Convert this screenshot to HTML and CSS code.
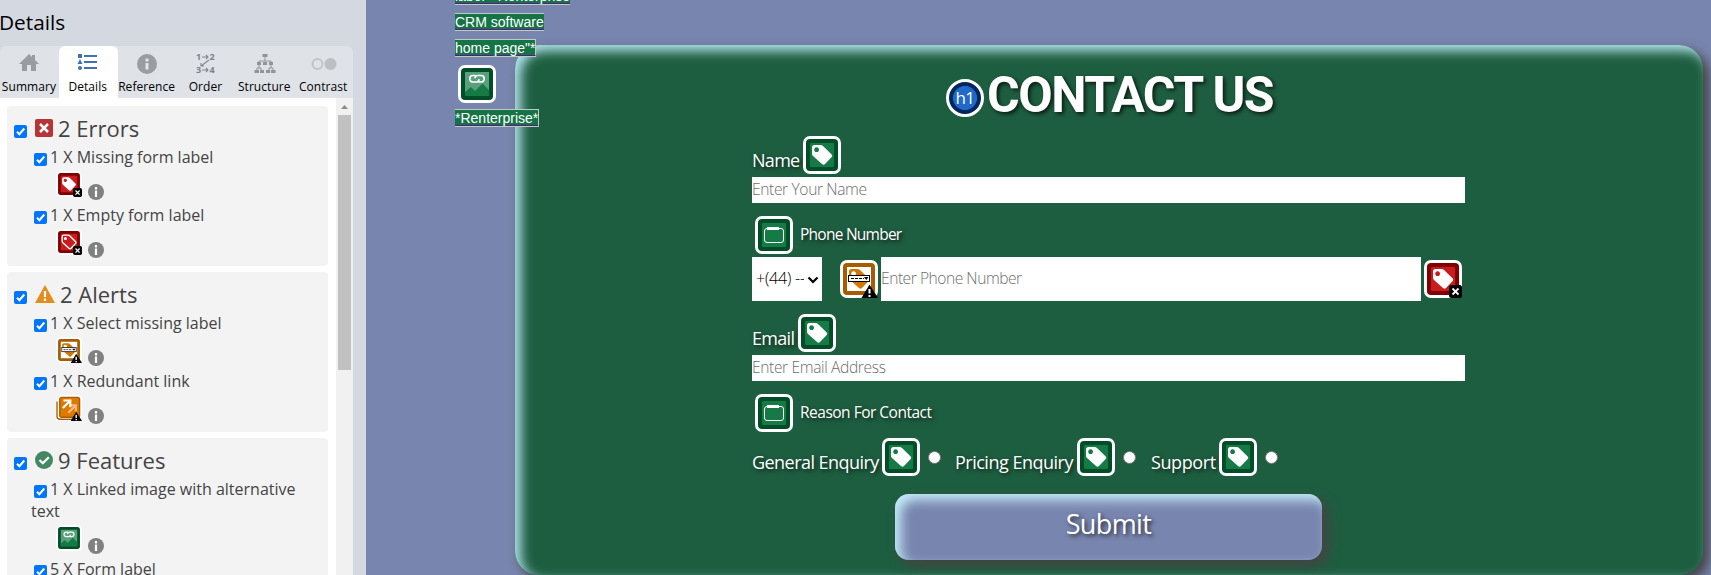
FILE: index.html
```
<!DOCTYPE html>
<html lang="en">
<head>
<meta charset="utf-8">
<title>Contact us</title>
<link rel="stylesheet" href="styles.css">
</head>
<body>
<svg class="defs" aria-hidden="true">
  <symbol id="tagshape" viewBox="0 0 38 38"><path fill-rule="evenodd" d="M9 11.5Q9 9 11.5 9H17.5Q19 9 20 10L28.7 18.6Q29.8 19.8 28.7 21L22 28Q20.5 29.5 19 28L10 20Q9 19 9 17.5ZM13.6 11.3a2.4 2.4 0 1 0 .01 0Z"/></symbol>
  <symbol id="warnbadge" viewBox="0 0 38 38"><path d="M29.500 24.500L38 38H21.500Z"/><path d="M29.500 29v4.500M29.500 35v2" stroke="#fff" stroke-width="2"/></symbol>
  <symbol id="xbadge" viewBox="0 0 38 38"><rect x="25" y="25" width="13" height="13" rx="2.500"/><path d="M28.500 28.500l6 6m0-6l-6 6" stroke="#fff" stroke-width="1.800"/></symbol>
  <symbol id="tag" viewBox="0 0 38 38"><rect width="38" height="38" rx="7" fill="#fff"/><rect x="3" y="3" width="32" height="32" rx="4" fill="#014d27"/><rect x="7" y="7" width="24" height="24" rx="1" fill="#167a47"/><use href="#tagshape" fill="#fff"/></symbol>
  <symbol id="missing" viewBox="0 0 38 38"><rect width="38" height="38" rx="7" fill="#fff"/><rect x="3" y="3" width="32" height="32" rx="4" fill="#800000"/><rect x="7" y="7" width="24" height="24" rx="1" fill="#c91c1e"/><use href="#tagshape" fill="#fff"/><use href="#xbadge"/></symbol>
  <symbol id="empty" viewBox="0 0 38 38"><rect width="38" height="38" rx="7" fill="#fff"/><rect x="3" y="3" width="32" height="32" rx="4" fill="#800000"/><rect x="7" y="7" width="24" height="24" rx="1" fill="#c91c1e"/><path d="M9 11.500Q9 9 11.500 9H17.500Q19 9 20 10L28.700 18.600Q29.800 19.800 28.700 21L22 28Q20.500 29.500 19 28L10 20Q9 19 9 17.500Z" fill="none" stroke="#fff" stroke-width="2"/><circle cx="13.800" cy="13.800" r="2.200" fill="#fff"/><use href="#xbadge"/></symbol>
  <symbol id="select" viewBox="0 0 38 38"><rect width="38" height="38" rx="7" fill="#fff"/><rect x="5" y="5" width="28" height="28" rx="2" fill="none" stroke="#a85c00" stroke-width="4"/><use href="#tagshape" fill="#d07800"/><rect x="8.500" y="15.500" width="21" height="6" fill="#fff" stroke="#000"/><path d="M11 18.500h13" stroke="#000" stroke-dasharray="3 1"/><path d="M24 17h4.500l-2.200 3z"/><use href="#warnbadge"/></symbol>
  <symbol id="redundant" viewBox="0 0 38 38"><rect x="-3" y="7" width="34" height="32" rx="6" fill="#fff"/><path d="M1.500 9.500v22q0 4 4 4h20" fill="none" stroke="#a85c00" stroke-width="2"/><rect x="3" width="35" height="34" rx="6" fill="#fff"/><rect x="5.500" y="3.500" width="29" height="29" rx="3" fill="#de7a00" stroke="#a85c00" stroke-width="2"/><path d="M18 26l11-11M20 15h9v9" fill="none" stroke="#f3bd83" stroke-width="3"/><path d="M10 19l11-11M11 8h10v10" fill="none" stroke="#fff" stroke-width="3"/><use href="#warnbadge"/></symbol>
  <symbol id="image" viewBox="0 0 38 38"><rect width="38" height="38" rx="7" fill="#fff"/><rect x="3" y="3" width="32" height="32" rx="4" fill="#014d27"/><rect x="7" y="7" width="24" height="24" fill="#59a17c"/><path d="M7 27l6-5 4 4 7.500-7.500L31 25v6H7z" fill="#167a47"/><path d="M17.500 10.500H15a3.250 3.250 0 0 0 0 6.500h3.500q1.800 0 2.700-2.800M20.500 17H23a3.250 3.250 0 0 0 0-6.500h-3.500q-1.800 0-2.700 2.800" fill="none" stroke="#fff" stroke-width="1.700"/></symbol>
  <symbol id="fieldset" viewBox="0 0 38 38"><rect width="38" height="38" rx="7" fill="#fff"/><rect x="3" y="3" width="32" height="32" rx="4" fill="#014d27"/><rect x="7" y="7" width="24" height="24" rx="1" fill="#167a47"/><rect x="9.500" y="12.500" width="19" height="14" rx="2.500" fill="none" stroke="#fff"/><path d="M12 12.500h12" stroke="#fff" stroke-width="3"/></symbol>
  <symbol id="info" viewBox="0 0 16 16"><circle cx="8" cy="8" r="8" fill="#808080"/><path d="M8 3v2.400M8 6.500V13" stroke="#fff" stroke-width="2.200"/></symbol>
  <symbol id="check" viewBox="0 0 13 13"><rect width="13" height="13" rx="2" fill="#0075ff"/><path d="M3 6.800L5.400 9.200 10.300 3.500" fill="none" stroke="#fff" stroke-width="2"/></symbol>
</svg>
<div class="app">
  <aside class="panel">
    <h2 class="panel-title">Details</h2>
    <nav class="tabs">
      <div class="tab"><svg width="24" height="24"><path d="M12 4L2 14h3v7h5v-6h4v6h5v-7h3l-4-4V5h-3v2z" fill="#9a9c9f"/></svg><span>Summary</span></div>
      <div class="tab active"><svg width="24" height="24"><g fill="#3d72b8"><rect x="2" y="4" width="4" height="4"/><path d="M4 9l2.500 5h-5z"/><circle cx="4" cy="18" r="2"/></g><path d="M8 6h13M8 12h13M8 18h13" stroke="#3d72b8" stroke-width="2"/></svg><span>Details</span></div>
      <div class="tab"><svg width="24" height="24"><circle cx="12" cy="14" r="10" fill="#9a9c9f"/><path d="M12 8.500v3M12 13v6.500" stroke="#e2e5e9" stroke-width="3"/></svg><span>Reference</span></div>
      <div class="tab"><svg class="order" width="24" height="24"><g fill="#808285"><text x="2" y="10">1</text><text x="15.500" y="10">2</text><text x="2" y="23">3</text><text x="15.500" y="23">4</text></g><path d="M8 7h6m-2-2l2 2-2 2M8 20h6m-2-2l2 2-2 2M15 10l-8 6m0-3v3h3" fill="none" stroke="#85878a" stroke-width="1.100"/></svg><span>Order</span></div>
      <div class="tab"><svg width="24" height="24"><path d="M12 7v4M6 13v-2h12v2M4 20v-2h4v2M16 20v-2h4v2M6 15v3M18 15v3" fill="none" stroke="#929497"/><g fill="#929497"><rect x="9.500" y="4" width="5" height="3"/><rect x="4" y="12" width="4" height="3"/><rect x="10" y="12" width="4" height="3"/><rect x="16" y="12" width="4" height="3"/><rect x="1.500" y="20" width="4.500" height="3"/><rect x="7" y="20" width="4" height="3"/><rect x="13" y="20" width="4" height="3"/><rect x="18" y="20" width="4.500" height="3"/></g></svg><span>Structure</span></div>
      <div class="tab"><svg width="26" height="24"><circle cx="6.500" cy="14" r="5" fill="none" stroke="#c2c5c8" stroke-width="2"/><circle cx="19.500" cy="14" r="6" fill="#bcbfc3"/></svg><span>Contrast</span></div>
    </nav>
    <div class="scroller">
      <div class="cards">
        <section class="card">
          <h3 class="card-head"><svg class="chk"><use href="#check"/></svg><svg width="18" height="18"><rect width="18" height="18" rx="2" fill="#b73536"/><path d="M5 5l8 8m0-8l-8 8" stroke="#fff" stroke-width="2.500"/></svg><span>2 Errors</span></h3>
          <div class="item"><svg class="chk"><use href="#check"/></svg>1 X Missing form label</div>
          <div class="icons"><svg class="mini"><use href="#missing"/></svg><svg class="info"><use href="#info"/></svg></div>
          <div class="item"><svg class="chk"><use href="#check"/></svg>1 X Empty form label</div>
          <div class="icons"><svg class="mini"><use href="#empty"/></svg><svg class="info"><use href="#info"/></svg></div>
        </section>
        <section class="card">
          <h3 class="card-head"><svg class="chk"><use href="#check"/></svg><svg width="20" height="18"><path d="M10 0l10 18H0z" fill="#e38b1b"/><path d="M10 6v6M10 13.500v2.500" stroke="#fff" stroke-width="2.200"/></svg><span>2 Alerts</span></h3>
          <div class="item"><svg class="chk"><use href="#check"/></svg>1 X Select missing label</div>
          <div class="icons"><svg class="mini"><use href="#select"/></svg><svg class="info"><use href="#info"/></svg></div>
          <div class="item"><svg class="chk"><use href="#check"/></svg>1 X Redundant link</div>
          <div class="icons"><svg class="mini"><use href="#redundant"/></svg><svg class="info"><use href="#info"/></svg></div>
        </section>
        <section class="card">
          <h3 class="card-head"><svg class="chk"><use href="#check"/></svg><svg width="18" height="18"><circle cx="9" cy="9" r="9" fill="#438863"/><path d="M4.500 9l3.300 3.300 6-6" fill="none" stroke="#fff" stroke-width="2.200"/></svg><span>9 Features</span></h3>
          <div class="item"><svg class="chk"><use href="#check"/></svg>1 X Linked image with alternative text</div>
          <div class="icons"><svg class="mini"><use href="#image"/></svg><svg class="info"><use href="#info"/></svg></div>
          <div class="item"><svg class="chk"><use href="#check"/></svg>5 X Form label</div>
          <div class="icons"></div>
        </section>
      </div>
      <div class="bar"><svg width="17" height="17"><path d="M8.500 7L12 11H5z" fill="#8b8b8b"/></svg><div class="thumb"></div></div>
    </div>
  </aside>
  <main class="page">
    <div class="alt">
      <span class="hl wrap-end">label="Renterprise</span>
      <span class="hl wrap-end">CRM software</span>
      <span class="hl last">home page"*</span>
      <svg class="badge"><use href="#image"/></svg>
      <span class="hl last">*Renterprise*</span>
    </div>
    <div class="contact">
      <h1 class="title"><span class="h1mark">h1</span><span class="title-text">CONTACT US</span></h1>
      <form class="form">
        <div class="row"><label class="label name">Name</label><svg class="badge"><use href="#tag"/></svg></div>
        <div class="field"><span>Enter Your Name</span></div>
        <div class="legend"><svg class="badge"><use href="#fieldset"/></svg><span>Phone Number</span></div>
        <div class="phone-row">
          <div class="select"><span>+(44) --</span><svg width="12" height="8"><path d="M1.500 1.500L6 6l4.500-4.500" fill="none" stroke="#000" stroke-width="2.200"/></svg></div>
          <svg class="badge alert"><use href="#select"/></svg>
          <div class="field tall"><span>Enter Phone Number</span></div>
          <svg class="badge"><use href="#missing"/></svg>
        </div>
        <div class="row email-row"><label class="label email">Email</label><svg class="badge"><use href="#tag"/></svg></div>
        <div class="field"><span>Enter Email Address</span></div>
        <div class="legend reason"><svg class="badge"><use href="#fieldset"/></svg><span>Reason For Contact</span></div>
        <div class="row radios">
          <label class="label general">General Enquiry</label><svg class="badge"><use href="#tag"/></svg><i class="radio"></i>
          <label class="label pricing">Pricing Enquiry</label><svg class="badge"><use href="#tag"/></svg><i class="radio"></i>
          <label class="label support">Support</label><svg class="badge"><use href="#tag"/></svg><i class="radio"></i>
        </div>
        <div class="submit"><span>Submit</span></div>
      </form>
    </div>
  </main>
</div>
</body>
</html>
```
FILE: styles.css
```
* { box-sizing: border-box; }
body { margin: 0; overflow: hidden; font-family: "Open Sans", "Noto Sans", sans-serif; }
svg { display: block; flex: none; }
.defs { width: 0; height: 0; position: absolute; }
.app { display: flex; width: 1711px; height: 575px; overflow: hidden; }

/* Side panel */
.panel { width: 366px; flex: none; background: #d4d8e0; display: flex; flex-direction: column; }
.panel-title { margin: 0 0 0 -1px; height: 46px; flex: none; font-size: 20.8px; font-weight: 400; line-height: 44px; color: #000; }
.tabs { width: 353px; height: 52px; flex: none; display: grid; grid-template-columns: repeat(6, 1fr); background: #dfe2e7; border-radius: 6px 6px 0 0; }
.tab { display: flex; flex-direction: column; align-items: center; padding-top: 4px; font-size: 12px; line-height: 18px; letter-spacing: .05px; color: #000; }
.tab span { padding-top: 4px; margin-left: -1px; }
.tab.active { background: #fff; border-radius: 6px 6px 0 0; }
.order { font: bold 9px "Open Sans", sans-serif; overflow: visible; }
.scroller { display: flex; width: 353px; flex: 1; min-height: 0; background: #fff; overflow: hidden; }
.cards { width: 336px; padding: 8px 8px 0 7px; display: flex; flex-direction: column; gap: 6px; }
.card { background: #f3f3f3; border-radius: 4px; padding: 0 16px 4px 24px; flex: none; color: #444; }
.card-head { margin: 0 0 0 -17px; height: 40px; display: flex; align-items: flex-start; padding-top: 13px; font-size: 22px; font-weight: 400; }
.chk { width: 13px; height: 13px; }
.card-head .chk { margin: 6px 8px 0 0; }
.card-head span { line-height: 30px; margin: -6px 0 0 5px; }
.item { font-size: 16px; line-height: 22px; }
.item .chk { display: inline-block; vertical-align: -3px; margin: 0 3px 0 3px; }
.icons { height: 36px; display: flex; padding: 3px 0 0 25px; gap: 6px; }
.mini { width: 26px; height: 26px; overflow: visible; }
.info { width: 16px; height: 16px; margin-top: 13px; }
.bar { width: 17px; background: #f1f1f1; }
.thumb { width: 13px; height: 255px; margin-left: 2px; background: #c1c1c1; }

/* Page */
.page { flex: 1; background: #7885ae; position: relative; overflow: hidden; }
.badge { width: 38px; height: 38px; }
.alt { position: absolute; z-index: 1; left: 89px; top: -13px; display: flex; flex-direction: column; align-items: flex-start; gap: 8px; }
.hl { height: 18px; font: 14px/16px "Liberation Sans", Arial, sans-serif; color: #fff; background: #157446; border: 1px solid #c5c9c4; text-decoration: underline #551a8b; text-underline-offset: 2px; white-space: pre; }
.wrap-end { border-right: 0; border-left: 0; }
.hl.last { border-left: 0; }
.alt .badge { margin: 0 3px -2px; }
.contact { margin: 45px 0 0 149px; width: 1188px; height: 530px; border-radius: 24px; background: #1e5e40; box-shadow: inset 6px 6px 12px #b4e4ee, 6px 6px 12px #444; }
.title { margin: 0; height: 91px; padding: 34px 0 0 431px; display: flex; align-items: flex-start; color: #fff; }
.h1mark { width: 38px; height: 38px; border: 3px solid #fff; border-radius: 50%; background: radial-gradient(circle closest-side, #2069cc 73%, #00265c 77%); font: 17px/32px "Open Sans", sans-serif; letter-spacing: -.5px; text-align: center; }
.title-text { margin: -9px 0 0 3px; font: 700 50px/50px Roboto, sans-serif; letter-spacing: -1.5px; white-space: nowrap; text-shadow: 2px 2px 4px rgba(0,0,0,.75); }
.form { width: 713px; margin-left: 237px; color: #fff; white-space: nowrap; }
.row { display: flex; height: 41px; }
.label { font-size: 18px; line-height: 24px; padding-top: 12px; text-shadow: 2px 2px 4px rgba(0,0,0,.7); letter-spacing: -.7px; }
.name { width: 51px; }
.field { height: 26px; background: #fff; color: #6d6d6d; font-size: 15.6px; font-weight: 300; line-height: 25px; overflow: hidden; letter-spacing: -.37px; }
.legend { display: flex; height: 54px; padding: 13px 0 0 3px; gap: 7px; font-size: 15.5px; line-height: 36px; letter-spacing: -.75px; text-shadow: 2px 2px 4px rgba(0,0,0,.7); }
.reason { letter-spacing: -.5px; }
.phone-row { display: flex; height: 44px; }
.phone-row .badge { margin: 3px 3px 0; }
.phone-row .alert { margin-left: 18px; }
.select { width: 70px; background: #fff; color: #000; display: flex; padding-left: 4px; font-size: 16px; line-height: 43px; letter-spacing: -.2px; font-weight: 300; }
.select span { width: 48px; overflow: hidden; }
.select svg { margin: 19px 0 0 3px; }
.tall { width: 540px; height: 44px; line-height: 43px; letter-spacing: -.47px; }
.email-row { height: 54px; padding-top: 13px; }
.email { width: 46px; }
.radios { height: 59px; padding-top: 3px; }
.general { width: 130px; letter-spacing: -.55px; }
.pricing { width: 122px; letter-spacing: -.5px; }
.support { width: 68px; letter-spacing: -.4px; margin-left: 1px; }
.radio { width: 13px; height: 13px; flex: none; margin: 13px 14px 0 8px; border: 1px solid #767676; border-radius: 50%; background: #fff; }
.submit { width: 427px; height: 66px; margin: 0 0 0 143px; border-radius: 14px; background: #7885ae; box-shadow: inset 6px 6px 12px #c5ecfa, 6px 6px 12px #444; text-align: center; font-size: 27px; line-height: 60px; letter-spacing: -.6px; text-shadow: 2px 2px 4px rgba(0,0,0,.7); }
```
